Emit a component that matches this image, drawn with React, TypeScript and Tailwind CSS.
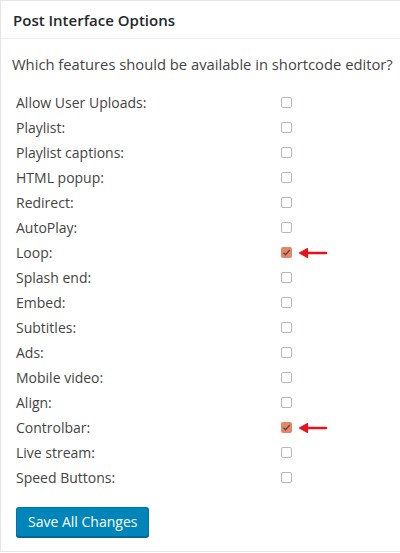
import React from "react";

const rows: { label: string; checked?: boolean }[] = [
  { label: "Allow User Uploads:" },
  { label: "Playlist:" },
  { label: "Playlist captions:" },
  { label: "HTML popup:" },
  { label: "Redirect:" },
  { label: "AutoPlay:" },
  { label: "Loop:", checked: true },
  { label: "Splash end:" },
  { label: "Embed:" },
  { label: "Subtitles:" },
  { label: "Ads:" },
  { label: "Mobile video:" },
  { label: "Align:" },
  { label: "Controlbar:", checked: true },
  { label: "Live stream:" },
  { label: "Speed Buttons:" },
];

function Arrow() {
  return (
    <svg width="30" height="12" viewBox="0 0 30 12" className="ml-[6px]">
      <line x1="6" y1="6" x2="28" y2="6" stroke="#e5141b" strokeWidth="2.5" strokeLinecap="round" />
      <path d="M9.5 1.5 L1.5 6 L9.5 10.5 Z" fill="#e5141b" stroke="#e5141b" strokeWidth="1.2" strokeLinejoin="round" />
    </svg>
  );
}

function Box({ checked }: { checked?: boolean }) {
  if (checked) {
    return (
      <div className="w-[11px] h-[11px] rounded-[2px] bg-[#e7856b] flex items-center justify-center">
        <svg width="9" height="9" viewBox="0 0 9 9">
          <path d="M1.5 4.8 L3.5 6.8 L7.8 2" fill="none" stroke="#5a4a40" strokeWidth="1.3" />
        </svg>
      </div>
    );
  }
  return <div className="w-[11px] h-[11px] rounded-[2px] border border-[#b4b9be] bg-white" />;
}

export default function App() {
  return (
    <div
      className="w-[400px] h-[553px] bg-white"
      style={{ fontFamily: '"Open Sans", "Noto Sans", sans-serif' }}
    >
      <div className="h-[552px] border-t border-l border-b border-[#e5e5e5] flex flex-col">
        <div className="h-[38px] border-b border-[#eeeeee] flex items-center pl-[12px] pt-[2px] text-[15px] font-semibold text-[#23282d]">
          Post Interface Options
        </div>
        <div className="pl-[11px] pt-[13px] text-[14.75px] text-[#444] leading-[24px] whitespace-nowrap">
          Which features should be available in shortcode editor?
        </div>
        <div className="mt-[14px] flex flex-col">
          {rows.map((r) => (
            <div key={r.label} className="h-[25px] flex items-center text-[14px] text-[#444]">
              <div className="w-[280px] pl-[15px]">{r.label}</div>
              <Box checked={r.checked} />
              {r.checked && <Arrow />}
            </div>
          ))}
        </div>
        <div className="pl-[15px] mt-[17px]">
          <button className="h-[30px] px-[11px] rounded-[3px] bg-[#0085ba] border border-[#0073aa] border-b-[#006799] text-white text-[14px] leading-none shadow-[0_1px_0_#006799]">
            Save All Changes
          </button>
        </div>
      </div>
    </div>
  );
}
